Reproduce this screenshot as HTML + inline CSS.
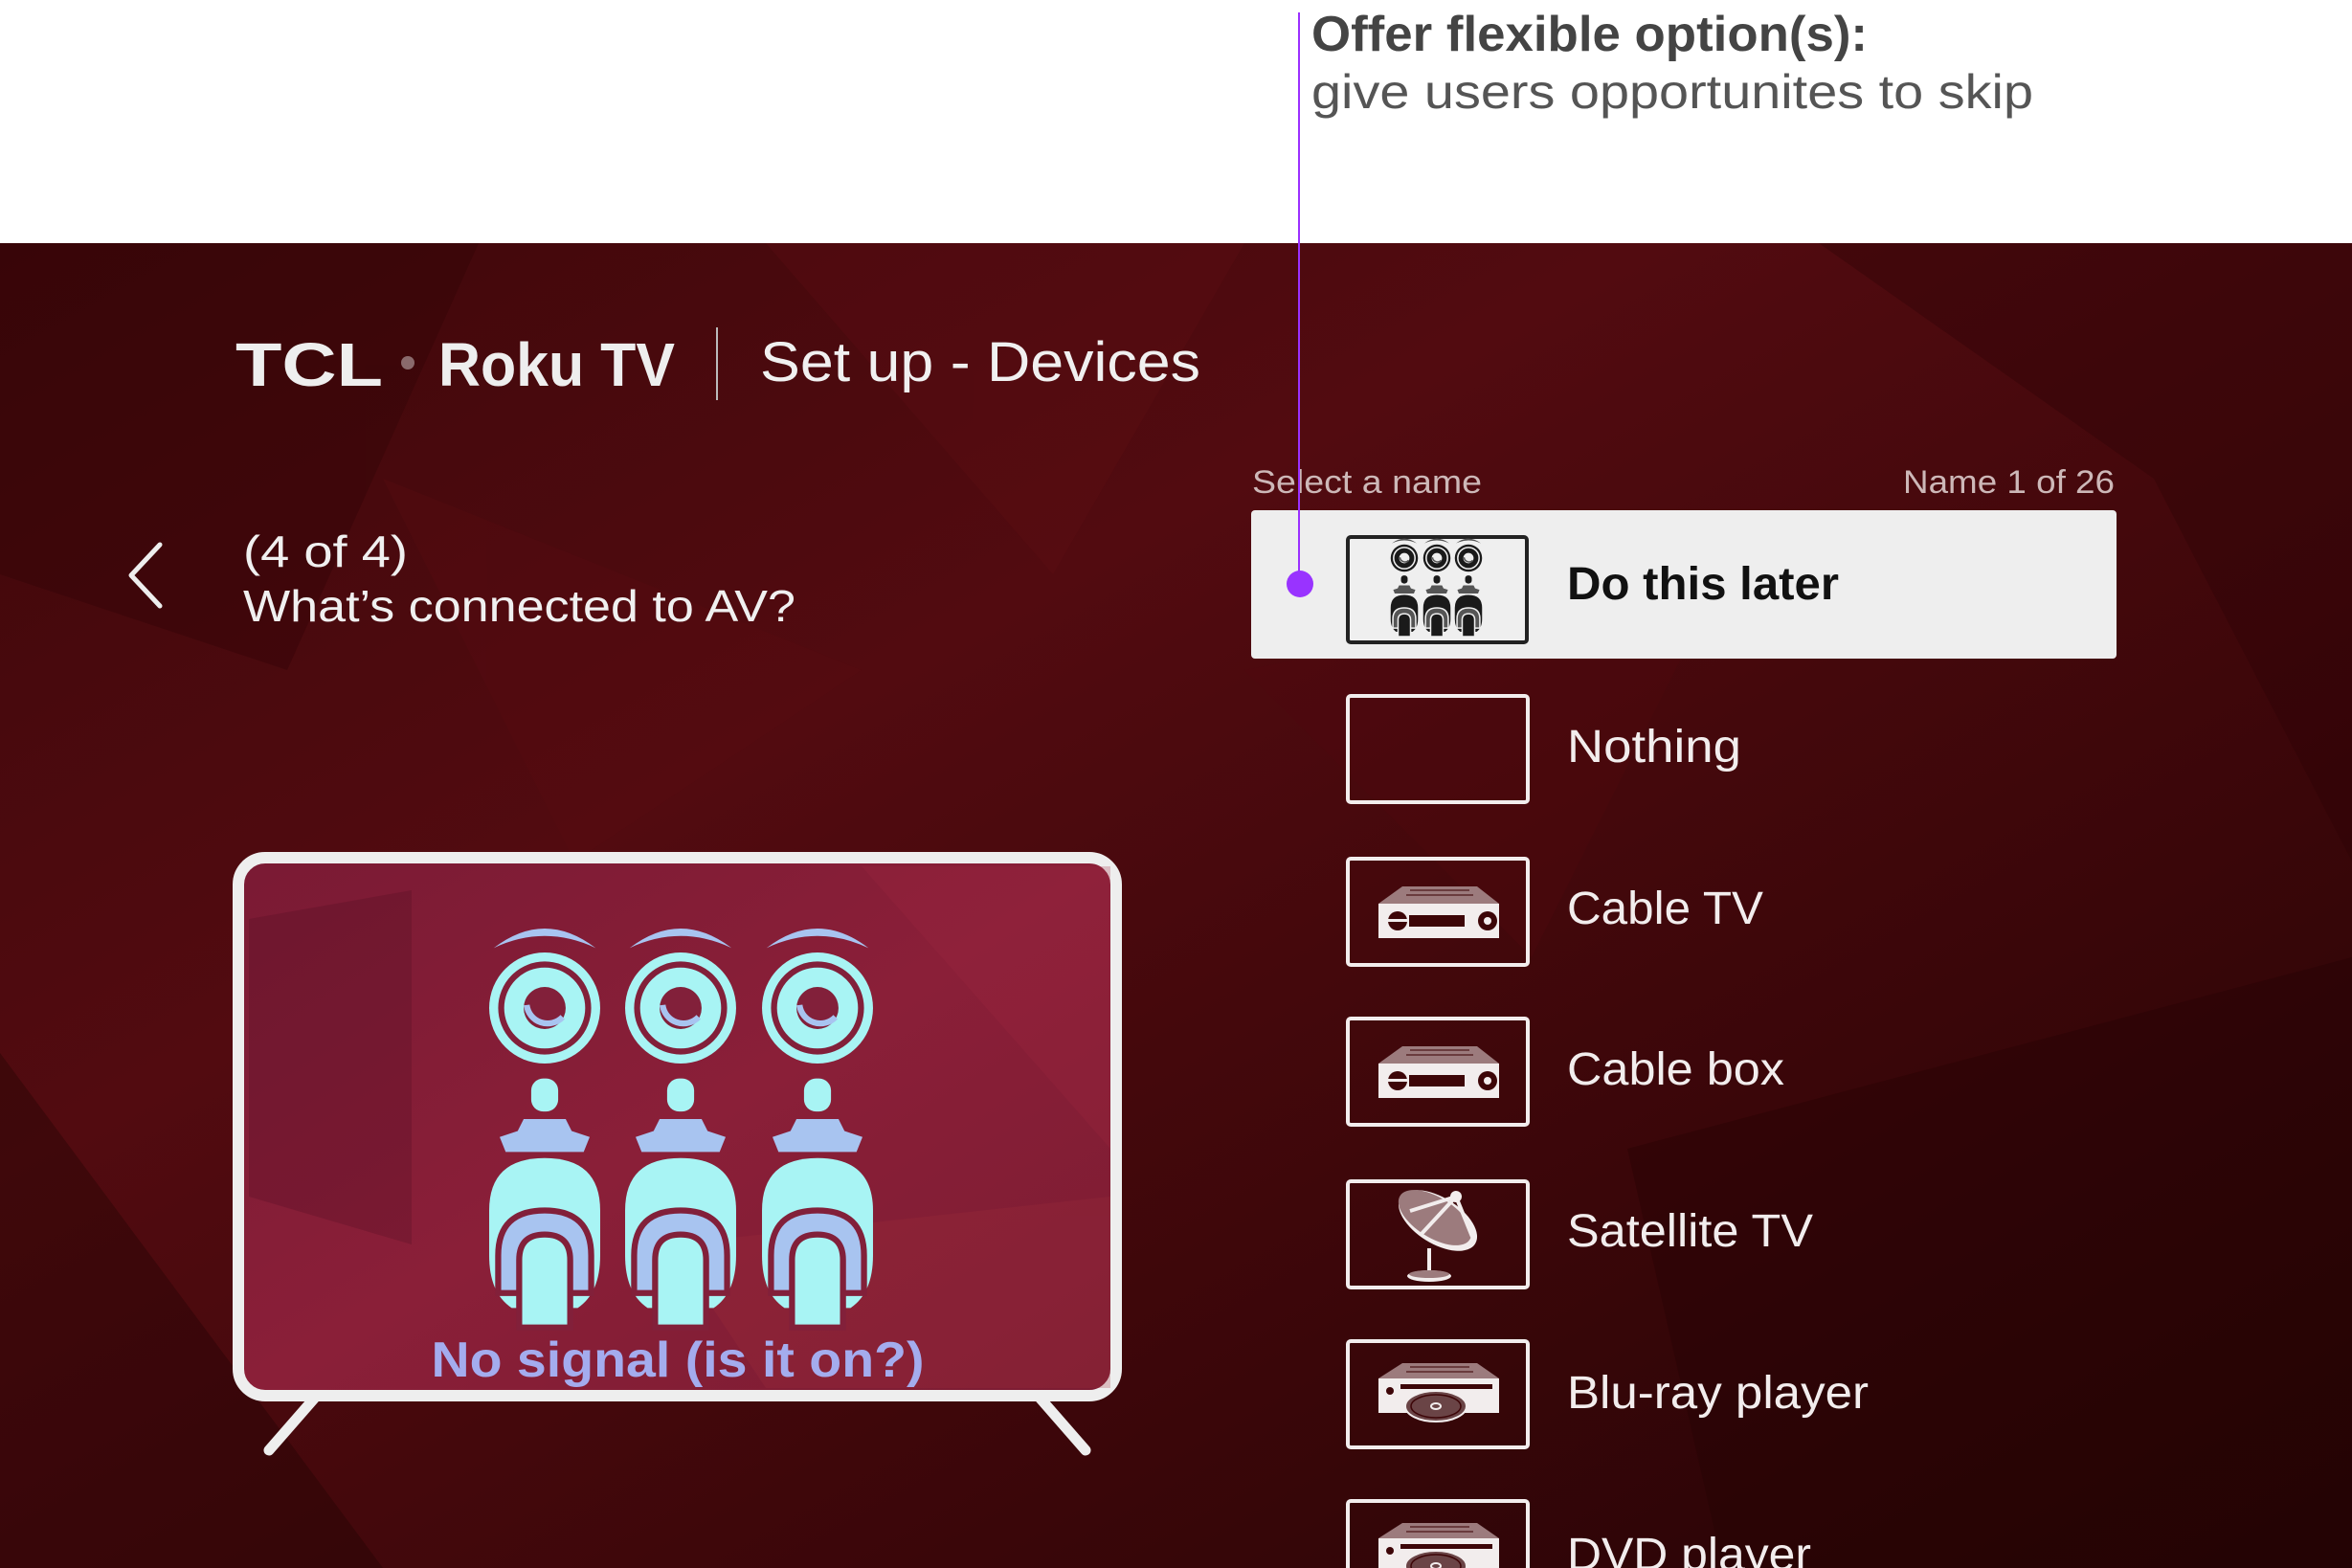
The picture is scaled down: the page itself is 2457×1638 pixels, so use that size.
<!DOCTYPE html>
<html><head><meta charset="utf-8"><style>
html,body{margin:0;padding:0;background:#fff;}
svg{display:block;}
text{font-family:"Liberation Sans",sans-serif;}
</style></head><body>
<svg width="2457" height="1638" viewBox="0 0 2457 1638" xmlns="http://www.w3.org/2000/svg">
<defs>
<linearGradient id="bg" x1="0" y1="0" x2="1" y2="1">
<stop offset="0" stop-color="#3e070a"/><stop offset="0.35" stop-color="#520b10"/><stop offset="0.7" stop-color="#3a0609"/><stop offset="1" stop-color="#240405"/>
</linearGradient>
<linearGradient id="scr" x1="0" y1="0" x2="1" y2="1">
<stop offset="0" stop-color="#7a1a34"/><stop offset="0.5" stop-color="#8a1f38"/><stop offset="1" stop-color="#7c1c32"/>
</linearGradient>
<g id="conn">
<path d="M-34 -40 Q0 -66 34 -40 Q0 -56 -34 -40Z" fill="var(--c2)"/>
<circle r="37" fill="var(--c)"/>
<circle r="29" fill="none" stroke="var(--bg)" stroke-width="4"/>
<circle r="14" fill="var(--bg)"/>
<path d="M-12 -2 A14 14 0 0 0 12 6" fill="none" stroke="var(--c2)" stroke-width="4"/>
<rect x="-9" y="47" width="18" height="22" rx="8" fill="var(--c)"/>
<path d="M-14 74 L14 74 L18 82 L30 86 L26 96 L-26 96 L-30 86 L-18 82Z" fill="var(--c2)"/>
<path d="M-37 135 Q-37 100 0 100 Q37 100 37 135 L37 165 Q37 190 22 200 L-22 200 Q-37 190 -37 165Z" fill="var(--c)"/>
<path d="M-31 190 L-31 165 Q-31 135 0 135 Q31 135 31 165 L31 190Z" fill="var(--c2)" stroke="var(--bg)" stroke-width="4"/>
<path d="M-17 213 L-17 168 Q-17 151 0 151 Q17 151 17 168 L17 213Z" fill="var(--c)" stroke="var(--bg)" stroke-width="4"/>
</g>
<g id="dev">
<path d="M58 31 L136 31 L159 49 L33 49Z" fill="#9c7b7d"/>
<path d="M66 35 L128 35 M62 40 L132 40" stroke="#6a3c3e" stroke-width="2"/>
<rect x="33" y="49" width="126" height="36" fill="#f2eded"/>
<rect x="65" y="61" width="58" height="12" fill="#3d0608"/>
<circle cx="53" cy="67" r="10" fill="#3d0608"/>
<rect x="43" y="65" width="20" height="3" fill="#f2eded"/>
<circle cx="147" cy="67" r="10" fill="#3d0608"/>
<circle cx="147" cy="67" r="4" fill="#f2eded"/>
</g>
<g id="disc">
<path d="M58 25 L136 25 L159 41 L33 41Z" fill="#9c7b7d"/>
<path d="M66 29 L128 29 M62 34 L132 34" stroke="#6a3c3e" stroke-width="2"/>
<rect x="33" y="41" width="126" height="36" fill="#f2eded"/>
<circle cx="45" cy="54" r="4" fill="#3d0608"/>
<rect x="56" y="47" width="96" height="5" fill="#3d0608"/>
<ellipse cx="93" cy="70" rx="32" ry="16" fill="#6a4446" stroke="#f2eded" stroke-width="2"/>
<ellipse cx="93" cy="70" rx="26" ry="12" fill="none" stroke="#3d0608" stroke-width="1.5"/>
<ellipse cx="93" cy="70" rx="5" ry="3" fill="none" stroke="#f2eded" stroke-width="2"/>
</g>
</defs>

<rect x="0" y="0" width="2457" height="254" fill="#fff"/>
<rect x="0" y="254" width="2457" height="1384" fill="url(#bg)"/>
<g opacity="0.35">
<polygon points="0,254 500,254 300,700 0,600" fill="#2e0406"/>
<polygon points="800,254 1300,254 1100,600" fill="#5e0e14"/>
<polygon points="1900,254 2457,254 2457,900 2250,500" fill="#2a0405"/>
<polygon points="1300,700 1800,600 1600,1000" fill="#50090e"/>
<polygon points="0,1100 400,1638 0,1638" fill="#1c0203"/>
<polygon points="1700,1200 2457,1000 2457,1638 1800,1638" fill="#220304"/>
<polygon points="400,500 900,700 600,900" fill="#5a0c12"/>
</g>

<text x="1370" y="53" font-size="52" font-weight="bold" fill="#444" textLength="581" lengthAdjust="spacingAndGlyphs">Offer flexible option(s):</text>
<text x="1370" y="113" font-size="50" fill="#555" textLength="754" lengthAdjust="spacingAndGlyphs">give users opportunites to skip</text>

<text x="246" y="403" font-size="64" font-weight="bold" fill="#eee" textLength="154" lengthAdjust="spacingAndGlyphs">TCL</text>
<circle cx="426" cy="379" r="7" fill="#8a6a6c"/>
<text x="458" y="403" font-size="64" font-weight="bold" fill="#eee" textLength="247" lengthAdjust="spacingAndGlyphs">Roku TV</text>
<line x1="749" y1="342" x2="749" y2="418" stroke="#bbb" stroke-width="2"/>
<text x="794" y="398" font-size="58" fill="#f0f0f0" textLength="460" lengthAdjust="spacingAndGlyphs">Set up - Devices</text>

<polyline points="167,569 137,601 167,633" fill="none" stroke="#eee" stroke-width="5" stroke-linecap="round" stroke-linejoin="round"/>
<text x="254" y="592" font-size="46" fill="#f0f0f0" textLength="172" lengthAdjust="spacingAndGlyphs">(4 of 4)</text>
<text x="254" y="649" font-size="46" fill="#f0f0f0" textLength="577" lengthAdjust="spacingAndGlyphs">What’s connected to AV?</text>

<text x="1308" y="515" font-size="34" fill="#cdb8b8" textLength="240" lengthAdjust="spacingAndGlyphs">Select a name</text>
<text x="2209" y="515" font-size="34" fill="#cdb8b8" text-anchor="end" textLength="221" lengthAdjust="spacingAndGlyphs">Name 1 of 26</text>

<rect x="1307" y="533" width="904" height="155" rx="4" fill="#eeeeee"/>
<rect x="1408" y="561" width="187" height="110" rx="3" fill="#efefef" stroke="#222" stroke-width="4"/>
<g transform="translate(1467,583) scale(0.385)" style="--c:#1a1a1a;--c2:#555;--bg:#efefef"><use href="#conn"/></g>
<g transform="translate(1501,583) scale(0.385)" style="--c:#1a1a1a;--c2:#555;--bg:#efefef"><use href="#conn"/></g>
<g transform="translate(1534,583) scale(0.385)" style="--c:#1a1a1a;--c2:#555;--bg:#efefef"><use href="#conn"/></g>
<text x="1637" y="626" font-size="48" font-weight="bold" fill="#111" textLength="284" lengthAdjust="spacingAndGlyphs">Do this later</text>

<g fill="none" stroke="#f2eded" stroke-width="4">
<rect x="1408" y="727" width="188" height="111" rx="3"/>
<rect x="1408" y="897" width="188" height="111" rx="3"/>
<rect x="1408" y="1064" width="188" height="111" rx="3"/>
<rect x="1408" y="1234" width="188" height="111" rx="3"/>
<rect x="1408" y="1401" width="188" height="111" rx="3"/>
<rect x="1408" y="1568" width="188" height="111" rx="3"/>
</g>
<use href="#dev" transform="translate(1407,895)"/>
<use href="#dev" transform="translate(1407,1062)"/>
<g transform="translate(1407,1232)">
<ellipse cx="95" cy="43" rx="46" ry="24" transform="rotate(32 95 43)" fill="#f2eded"/>
<ellipse cx="92" cy="40" rx="43" ry="21" transform="rotate(32 92 40)" fill="#9c7b7d"/>
<path d="M66 33 L114 18 M77 58 L114 18 M131 60 L114 18" stroke="#f2eded" stroke-width="4"/>
<circle cx="114" cy="18" r="6" fill="#f2eded"/>
<rect x="84" y="72" width="4" height="28" fill="#f2eded"/>
<ellipse cx="86" cy="101" rx="23" ry="6" fill="#f2eded"/>
<ellipse cx="86" cy="99" rx="21" ry="4" fill="#9c7b7d"/>
</g>
<use href="#disc" transform="translate(1407,1399)"/>
<use href="#disc" transform="translate(1407,1566)"/>

<g font-size="48" fill="#f2eded">
<text x="1637" y="796" textLength="182" lengthAdjust="spacingAndGlyphs">Nothing</text>
<text x="1637" y="965" textLength="205" lengthAdjust="spacingAndGlyphs">Cable TV</text>
<text x="1637" y="1133" textLength="227" lengthAdjust="spacingAndGlyphs">Cable box</text>
<text x="1637" y="1302" textLength="257" lengthAdjust="spacingAndGlyphs">Satellite TV</text>
<text x="1637" y="1471" textLength="315" lengthAdjust="spacingAndGlyphs">Blu-ray player</text>
<text x="1637" y="1640" textLength="255" lengthAdjust="spacingAndGlyphs">DVD player</text>
</g>

<line x1="1357" y1="13" x2="1357" y2="610" stroke="#9b30ff" stroke-width="2"/>
<circle cx="1358" cy="610" r="14" fill="#9933ff"/>

<line x1="329" y1="1460" x2="281" y2="1515" stroke="#eee" stroke-width="11" stroke-linecap="round"/>
<line x1="1086" y1="1460" x2="1134" y2="1515" stroke="#eee" stroke-width="11" stroke-linecap="round"/>
<rect x="249" y="896" width="917" height="562" rx="28" fill="url(#scr)" stroke="#eee" stroke-width="12"/>
<g opacity="0.25">
<polygon points="260,960 430,930 430,1300 260,1250" fill="#4a0a1e"/>
<polygon points="900,905 1160,905 1160,1200" fill="#a02840"/>
<polygon points="700,1300 1160,1250 1160,1450 800,1450" fill="#a0303a"/>
</g>
<g style="--c:#a8f4f4;--c2:#a8c4f0;--bg:#82203a">
<g transform="translate(569,1053) scale(1.567)"><use href="#conn"/></g>
<g transform="translate(711,1053) scale(1.567)"><use href="#conn"/></g>
<g transform="translate(854,1053) scale(1.567)"><use href="#conn"/></g>
</g>
<text x="708" y="1438" font-size="52" font-weight="bold" fill="#a4acee" text-anchor="middle" textLength="515" lengthAdjust="spacingAndGlyphs">No signal (is it on?)</text>
</svg>
</body></html>
